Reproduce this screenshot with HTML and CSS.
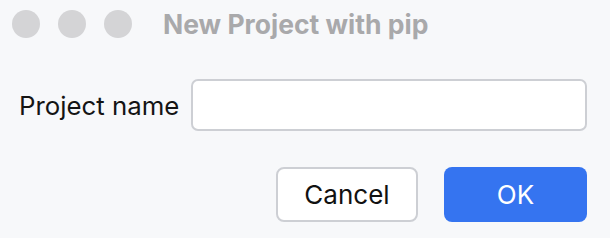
FILE: index.html
```html
<!DOCTYPE html>
<html>
<head>
<meta charset="utf-8">
<link rel="stylesheet" href="styles.css">
</head>
<body>
<div class="dialog">
  <div class="titlebar">
    <div class="lights">
      <span class="light"></span>
      <span class="light"></span>
      <span class="light"></span>
    </div>
    <div class="title">New Project with pip</div>
  </div>
  <div class="form-row">
    <label class="label" for="pname">Project name</label>
    <input class="input" id="pname" type="text">
  </div>
  <div class="buttons">
    <button class="btn btn-cancel">Cancel</button>
    <button class="btn btn-ok">OK</button>
  </div>
</div>
</body>
</html>
```

FILE: styles.css
```css
html, body {
  margin: 0;
  padding: 0;
  background: #f7f8fa;
}
.dialog {
  width: 610px;
  height: 238px;
  font-family: Inter, "Noto Sans", sans-serif;
  box-sizing: border-box;
}
.titlebar {
  display: flex;
  align-items: center;
  height: 48px;
  padding-left: 12px;
}
.lights {
  display: flex;
  gap: 18px;
}
.light {
  width: 28px;
  height: 28px;
  border-radius: 50%;
  background: #d4d4d6;
}
.title {
  margin-left: 31px;
  font-size: 26.5px;
  font-weight: 700;
  color: #a9a9ab;
}
.form-row {
  display: flex;
  align-items: center;
  margin-top: 31px;
  padding: 0 23px 0 19px;
}
.label {
  font-size: 25.8px;
  color: #141414;
  margin-right: 12px;
}
.input {
  flex: 1;
  height: 52px;
  box-sizing: border-box;
  border: 2px solid #cdcfd4;
  border-radius: 7px;
  background: #fff;
  outline: none;
}
.buttons {
  display: flex;
  justify-content: flex-end;
  gap: 26px;
  margin-top: 36px;
  padding-right: 23px;
}
.btn {
  height: 55px;
  box-sizing: border-box;
  border-radius: 8px;
  font-family: Inter, "Noto Sans", sans-serif;
  font-size: 26px;
}
.btn-cancel {
  width: 142px;
  background: #fff;
  border: 2px solid #cdcfd4;
  color: #111;
}
.btn-ok {
  width: 143px;
  background: #3574f0;
  border: none;
  color: #fff;
}
```
